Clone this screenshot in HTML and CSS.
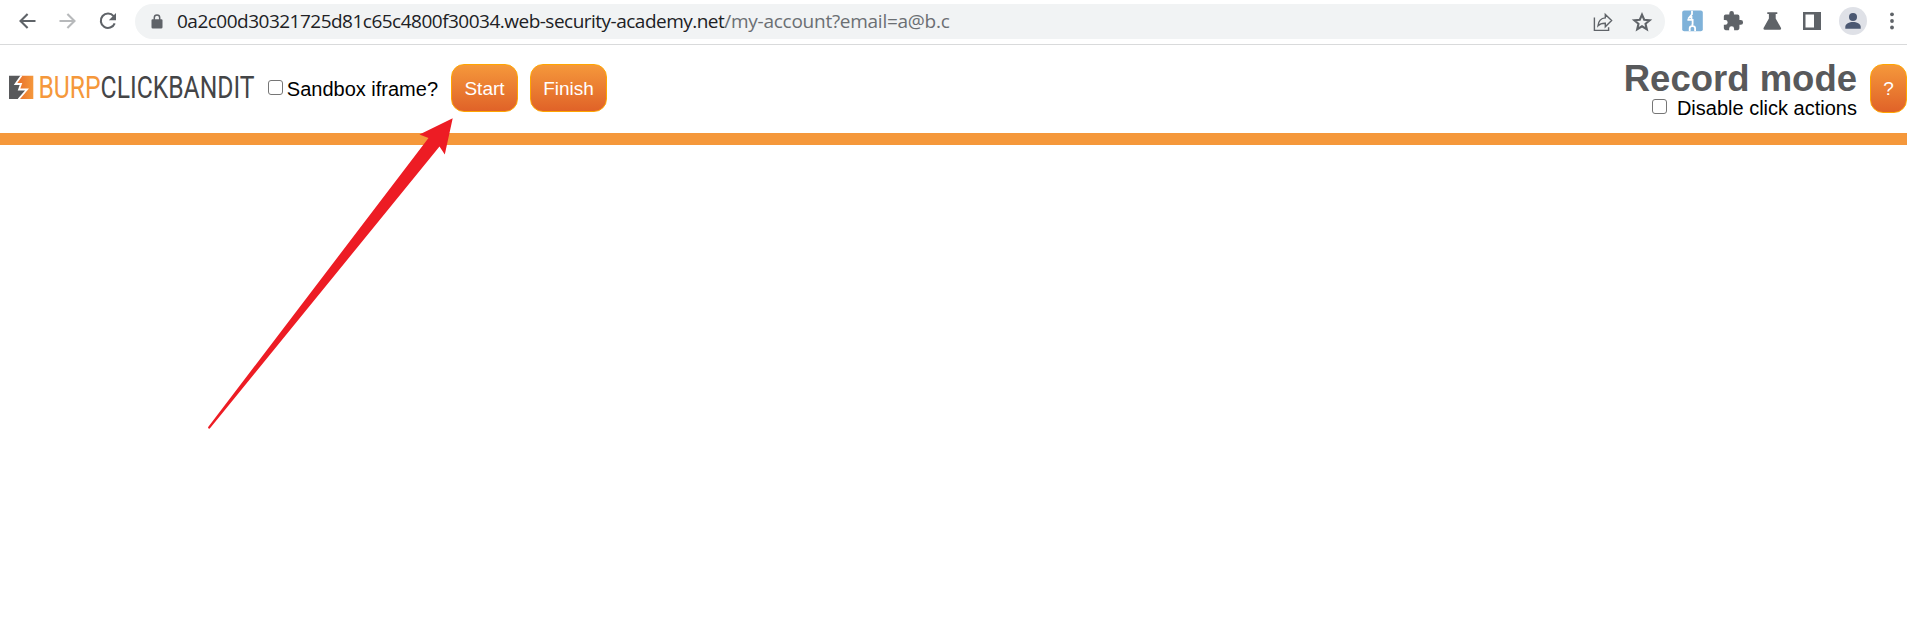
FILE: index.html
```html
<!DOCTYPE html>
<html lang="en">
<head>
<meta charset="utf-8">
<title>Burp Clickbandit</title>
<link rel="stylesheet" href="styles.css">
</head>
<body>
<header class="browser-bar">
  <nav class="nav-icons">
    <svg class="icon" width="24" height="24" viewBox="0 0 24 24"><path class="line" d="M20.500 12H5.800M12.600 4.900L5.500 12l7.100 7.100"/></svg>
    <svg class="icon faded" width="24" height="24" viewBox="0 0 24 24"><path class="line" d="M4.500 12h14.700M12.400 4.900l7.100 7.100-7.100 7.100"/></svg>
    <svg class="icon" width="24" height="24" viewBox="0 0 24 24"><path class="line" d="M18.600 7.200A7.200 7.200 0 1 0 19.700 14.400"/><path d="M21 4v7.200h-7.200z"/></svg>
  </nav>
  <div class="address">
    <svg class="lock" width="12" height="15" viewBox="0 0 12 15"><path d="M1.500 5.200h9A1 1 0 0 1 11.500 6.200v7a1.300 1.300 0 0 1-1.300 1.300H1.800A1.300 1.300 0 0 1 .5 13.200v-7a1 1 0 0 1 1-1z"/><path class="shackle" d="M3.300 6V3.700a2.700 2.700 0 0 1 5.400 0V6"/></svg>
    <span class="url">0a2c00d30321725d81c65c4800f30034.web-security-academy.net<span class="path">/my-account?email=a@b.c</span></span>
    <svg class="icon share" width="20" height="20" viewBox="0 0 20 20"><path class="thin" d="M1.400 5.500v12.900h14.200v-3.200M5 13.800c.5-5 3-7.600 7.300-7.900V2.400l6.300 6.200-6.300 6.200v-3.500c-3.300-.1-5.600.7-7.300 2.500z"/></svg>
    <svg class="icon star" width="20" height="20" viewBox="0 0 20 20"><path class="line" d="M10 2.600l2.200 5.100 5.500.5-4.200 3.600 1.300 5.400-4.800-2.900-4.800 2.900 1.300-5.400-4.200-3.600 5.500-.5z"/></svg>
  </div>
  <div class="extensions">
    <svg class="icon" width="22" height="22" viewBox="0 0 22 22"><rect class="burp-blue" x=".2" y=".6" width="20.600" height="20.600" rx="2"/><path class="cut" d="M10 .8v3.400L6.200 8.800M5.400 9.800h5.200v4.800M9.500 4.500v5M7.700 21v-2.800q0-2 2.700-2t2.700 2V21M10.400 14v2.500"/></svg>
    <svg class="icon puzzle" width="22" height="22" viewBox="0 0 24 24"><path d="M20.500 11H19V7a2 2 0 0 0-2-2h-4V3.500a2.500 2.500 0 0 0-5 0V5H4a2 2 0 0 0-2 2v3.800h1.500a2.700 2.700 0 0 1 0 5.400H2V20a2 2 0 0 0 2 2h3.800v-1.500a2.700 2.700 0 0 1 5.400 0V22H17a2 2 0 0 0 2-2v-4h1.500a2.500 2.500 0 0 0 0-5z"/></svg>
    <svg class="icon" width="20" height="20" viewBox="0 0 20 20"><path d="M4.300 1.200h10V3h-1.600v4.500l5.200 9.300q.8 1.900-1.200 1.900H1.900q-2 0-1.200-1.900l5.200-9.300V3H4.300z"/></svg>
    <svg class="icon" width="20" height="20" viewBox="0 0 20 20"><path fill-rule="evenodd" d="M1 1h18v18H1zM3.500 3.500v13H12v-13z"/></svg>
    <svg class="avatar" width="28" height="28" viewBox="0 0 28 28"><circle class="disc" cx="14" cy="14" r="14"/><circle cx="14" cy="10" r="4"/><path d="M6.300 21.700v-2c0-2.700 4-4.600 7.700-4.600s7.700 1.900 7.700 4.600v2z"/></svg>
    <svg class="icon dots" width="6" height="18" viewBox="0 0 6 18"><circle cx="3" cy="2.300" r="1.900"/><circle cx="3" cy="9" r="1.900"/><circle cx="3" cy="15.500" r="1.900"/></svg>
  </div>
</header>
<main class="bandit-bar">
  <svg class="logo" width="247" height="28" viewBox="0 0 247 28">
    <defs><linearGradient id="spark"><stop offset="0" stop-color="#e66b2b"/><stop offset="1" stop-color="#f5983b"/></linearGradient></defs>
    <path fill="#58595b" d="M1 1.800h12.500L7.500 10h5.500L11 15.500h8L10.500 25H1z"/>
    <path fill="url(#spark)" d="M13.500 1.800h11.800V25H10.500l8.500-9.500h-8L13 10H7.500z"/>
    <path fill="none" stroke="#fff" stroke-width="1.800" d="M13.500 1.500L7.500 10h5.500L11 15.500h8L10.500 25.300"/>
    <text class="click" x="30.500" y="24.200" textLength="216" lengthAdjust="spacingAndGlyphs"><tspan class="burp">BURP</tspan>CLICKBANDIT</text>
  </svg>
  <label class="sandbox"><span class="box"></span>Sandbox iframe?</label>
  <button class="btn start">Start</button>
  <button class="btn finish">Finish</button>
  <section class="mode">
    <h1 class="title">Record mode</h1>
    <label class="disable"><span class="box"></span>Disable click actions</label>
  </section>
  <button class="btn help">?</button>
</main>
<svg class="pointer" width="270" height="320" viewBox="190 115 270 320"><path d="M452.700 118.200L419.500 134.500 428.500 138 208 427.300q0 1.700 1.800 1.300L439.500 146.500 444.800 154.500z"/></svg>
</body>
</html>
```
FILE: styles.css
```css
* { box-sizing: border-box; }
body { margin: 0; background: #fff; font-family: "Liberation Sans", Arial, sans-serif; }
svg { display: block; flex: none; overflow: visible; }

.browser-bar { display: flex; height: 45px; border-bottom: 1px solid #d9dadb; }
.nav-icons { display: flex; gap: 16px; width: 135px; padding: 9px 0 0 15px; }
.icon { fill: #5f6368; }
.faded { opacity: .45; }
.line { fill: none; stroke: #5f6368; stroke-width: 2.1; }
.thin { fill: none; stroke: #5f6368; stroke-width: 1.4; }
.address { display: flex; align-items: center; width: 1530px; height: 35px; margin-top: 4px; padding: 0 13px 0 16px; border-radius: 18px; background: #f1f3f4; }
.lock { fill: #5f6368; }
.shackle { fill: none; stroke: #5f6368; stroke-width: 1.5; }
.url { flex: 1; margin-left: 14px; font: 19px/35px "Open Sans", "Noto Sans", sans-serif; letter-spacing: -.51px; color: #202124; white-space: nowrap; }
.path { letter-spacing: -.26px; color: #6b6f73; }
.star { margin-left: 19px; }
.extensions { display: flex; flex: 1; align-items: center; padding: 0 4px 2px 17px; }
.extensions svg + svg { margin-left: 19px; }
.extensions .puzzle { margin-left: 17.5px; }
.extensions .avatar { margin-left: 17px; }
.extensions .dots { margin-left: 22px; }
.burp-blue { fill: #7fb2d9; }
.cut { fill: none; stroke: #fff; stroke-width: 1.8; }
.avatar { fill: #4b5872; }
.disc { fill: #dfe1e7; }

.bandit-bar { display: flex; align-items: flex-start; height: 100px; border-bottom: 12px solid #f5983b; }
.logo { margin: 29px 0 0 8px; font: 400 31px/1 "Roboto", sans-serif; }
.click { fill: #444547; }
.burp { fill: #f5983b; }
.sandbox, .disable { display: flex; font-size: 20px; line-height: 24px; color: #000; white-space: nowrap; }
.sandbox { width: 170px; margin: 32px 0 0 13px; }
.box { width: 15px; height: 15px; border: 1px solid #767676; border-radius: 3px; background: #fff; }
.sandbox .box { margin: 3px 4px 0 0; }
.btn { height: 48px; margin: 19px 0 0; padding: 1px 0 0; border: 1px solid #ffa500; border-radius: 13px; background: linear-gradient(#f5983b, #e06228); color: #fff; font: 19px "Liberation Sans", Arial, sans-serif; }
.start { width: 67px; margin-left: 13px; }
.finish { width: 77px; margin-left: 12px; }
.mode { display: flex; flex-direction: column; align-items: flex-end; margin: 13px 13px 0 auto; }
.title { margin: 0; font-size: 36.5px; line-height: 42px; color: #58595b; }
.disable { margin-top: -4px; }
.disable .box { margin: 3px 10px 0 0; }
.help { width: 37px; height: 49px; padding: 0; }

.pointer { position: absolute; left: 190px; top: 115px; fill: #ed1c24; }
```
